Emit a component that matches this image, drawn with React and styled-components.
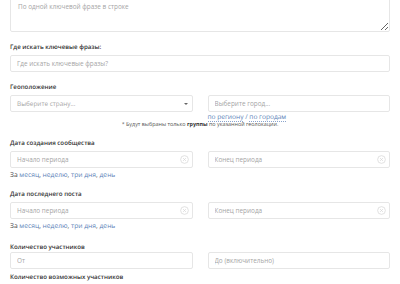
import styled, { createGlobalStyle } from "styled-components";

const Global = createGlobalStyle`
  body {
    margin: 0;
    background: #fff;
    font-family: "Open Sans", "Liberation Sans", sans-serif;
    text-rendering: geometricPrecision;
  }
`;

const Page = styled.div`
  width: 400px;
  height: 284px;
  overflow: hidden;
  padding: 0 10px;
  box-sizing: border-box;
`;

const Area = styled.textarea`
  display: block;
  width: 100%;
  height: 37px;
  margin-top: -5px;
  box-sizing: border-box;
  border: 1px solid #e6e6e6;
  border-radius: 2px;
  padding: 6px 7px;
  font-family: inherit;
  font-size: 6.4px;
  line-height: 10px;
  color: #555;
  &::placeholder {
    color: #a5a5a5;
  }
`;

const Group = styled.div`
  margin-top: ${(p) => p.$top ?? 10}px;
`;

const Label = styled.div`
  font-size: 6.2px;
  line-height: 10px;
  font-weight: 600;
  color: #333;
  margin-bottom: ${(p) => p.$mb ?? 3}px;
`;

const Row = styled.div`
  display: grid;
  grid-template-columns: 1fr 1fr;
  column-gap: 15px;
`;

const Field = styled.div`
  position: relative;
  height: 17px;
  box-sizing: border-box;
  border: 1px solid #e6e6e6;
  border-radius: 2px;
  display: flex;
  align-items: center;
`;

const Input = styled.input`
  flex: 1;
  min-width: 0;
  border: none;
  outline: none;
  background: transparent;
  padding: 0 6px;
  font-family: inherit;
  font-size: 6.4px;
  color: #555;
  &::placeholder {
    color: #a5a5a5;
  }
`;

const SelectText = styled.span`
  flex: 1;
  padding: 0 6px;
  font-size: 6.4px;
  color: #a5a5a5;
`;

const Caret = styled.span`
  width: 0;
  height: 0;
  margin-right: 4px;
  border-left: 2px solid transparent;
  border-right: 2px solid transparent;
  border-top: 2.5px solid #666;
`;

const ClearIcon = styled.svg`
  width: 9px;
  height: 9px;
  margin-right: 3px;
  flex: none;
`;

const Hint = styled.div`
  font-size: 6.6px;
  line-height: 9px;
  color: #5b7fb8;
`;

const Dotted = styled.span`
  border-bottom: 1px dotted #8aa4cc;
`;

const Note = styled.div`
  text-align: center;
  font-size: 5.4px;
  line-height: 7px;
  color: #555;
  b {
    font-weight: 700;
    color: #333;
  }
`;

const Quick = styled.div`
  margin-top: 2px;
  font-size: 6.7px;
  line-height: 9px;
  color: #444;
`;

const QLink = styled.span`
  color: #5b7fb8;
`;

const Clear = () => (
  <ClearIcon viewBox="0 0 10 10">
    <circle cx="5" cy="5" r="4.3" fill="none" stroke="#d6d6d6" strokeWidth="0.8" />
    <path d="M3.4 3.4 L6.6 6.6 M6.6 3.4 L3.4 6.6" stroke="#d6d6d6" strokeWidth="0.8" />
  </ClearIcon>
);

const DateRange = () => (
  <Row>
    <Field>
      <Input placeholder="Начало периода" />
      <Clear />
    </Field>
    <Field>
      <Input placeholder="Конец периода" />
      <Clear />
    </Field>
  </Row>
);

const QuickDates = () => (
  <Quick>
    За <QLink>месяц</QLink>, <QLink>неделю</QLink>, <QLink>три дня</QLink>,{" "}
    <QLink>день</QLink>
  </Quick>
);

const App = () => {
  return (
    <Page>
      <Global />
      <Area placeholder="По одной ключевой фразе в строке" />

      <Group>
        <Label>Где искать ключевые фразы:</Label>
        <Field>
          <Input placeholder="Где искать ключевые фразы?" />
        </Field>
      </Group>

      <Group>
        <Label>Геоположение</Label>
        <Row>
          <Field>
            <SelectText>Выберите страну...</SelectText>
            <Caret />
          </Field>
          <div>
            <Field>
              <Input placeholder="Выберите город..." />
            </Field>
            <Hint>
              <Dotted>по региону</Dotted> / <Dotted>по городам</Dotted>
            </Hint>
          </div>
        </Row>
        <Note>
          * Будут выбраны только <b>группы</b> по указанной геолокации.
        </Note>
      </Group>

      <Group>
        <Label>Дата создания сообщества</Label>
        <DateRange />
        <QuickDates />
      </Group>

      <Group>
        <Label>Дата последнего поста</Label>
        <DateRange />
        <QuickDates />
      </Group>

      <Group $top={12}>
        <Label $mb={0}>Количество участников</Label>
        <Row>
          <Field>
            <Input placeholder="От" />
          </Field>
          <Field>
            <Input placeholder="До (включительно)" />
          </Field>
        </Row>
      </Group>

      <Group $top={3}>
        <Label>Количество возможных участников</Label>
      </Group>
    </Page>
  );
};

export default App;
